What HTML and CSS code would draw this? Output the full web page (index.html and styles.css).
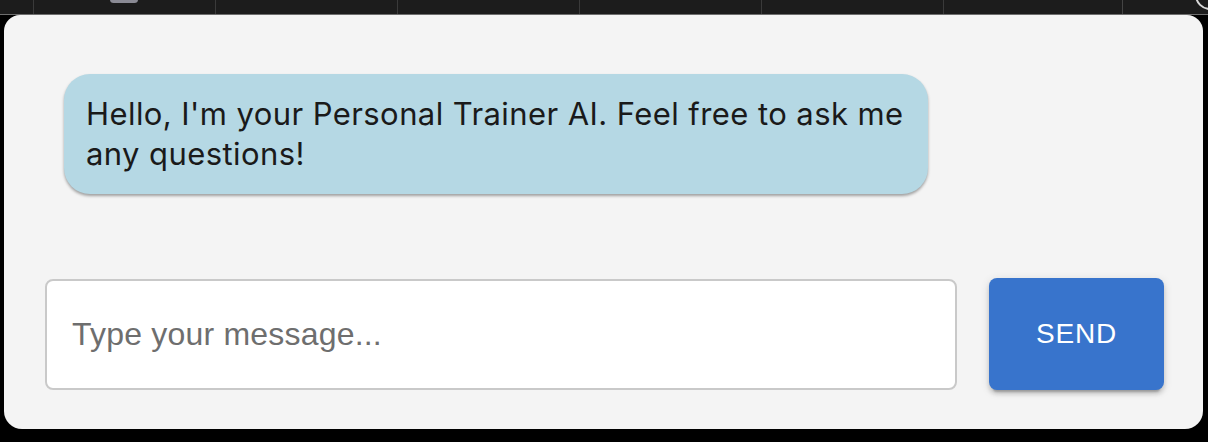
FILE: index.html
```html
<!DOCTYPE html>
<html lang="en">
<head>
<meta charset="utf-8">
<title>Personal Trainer AI</title>
<link rel="stylesheet" href="styles.css">
</head>
<body>
  <div class="topbar">
    <div class="tab tab-first"><span class="pill"></span></div>
    <div class="tab"></div>
    <div class="tab"></div>
    <div class="tab"></div>
    <div class="tab"></div>
    <div class="tab"></div>
    <div class="tab"></div>
    <div class="tab tab-last"><span class="ring"></span></div>
  </div>
  <main class="panel">
    <section class="messages">
      <div class="bubble">Hello, I'm your Personal Trainer AI. Feel free to ask me any questions!</div>
    </section>
    <form class="composer">
      <input class="field" type="text" placeholder="Type your message...">
      <button class="send" type="button">SEND</button>
    </form>
  </main>
</body>
</html>
```

FILE: styles.css
```css
html, body {
  margin: 0;
  padding: 0;
  background: #000;
  height: 442px;
  overflow: hidden;
}

.topbar {
  display: flex;
  height: 14px;
  background: #1c1c1c;
  border-bottom: 1px solid #6e6e6e;
  overflow: hidden;
  position: relative;
}

.tab {
  width: 182px;
  flex: none;
  border-left: 1px solid #3a3a3a;
  box-sizing: border-box;
  position: relative;
}

.tab-first {
  width: 33px;
  border-left: none;
  position: static;
}

.tab:nth-child(7) {
  width: 179px;
}

.tab-last {
  flex: 1;
  width: auto;
  border-left-color: #444;
}

.pill {
  position: absolute;
  left: 110px;
  top: -4px;
  width: 28px;
  height: 7px;
  border-radius: 4px;
  background: #8a8a94;
}

.ring {
  position: absolute;
  left: 72px;
  top: -20px;
  width: 26px;
  height: 26px;
  border-radius: 50%;
  border: 2px solid #d8d8d8;
}

.panel {
  margin: 0 5px 0 4px;
  height: 414px;
  box-sizing: border-box;
  background: #f4f4f4;
  border-radius: 16px 16px 18px 18px;
  padding: 40px 39px 39px 41px;
  display: flex;
  flex-direction: column;
}

.messages {
  flex: 1;
  padding: 19px 0 0 19px;
}

.bubble {
  width: 864px;
  box-sizing: border-box;
  padding: 20px 10px 20px 22px;
  background: #b5d8e4;
  border-radius: 26px;
  box-shadow: 0 2px 3px rgba(0, 0, 0, 0.35);
  font-family: Inter, "Noto Sans", sans-serif;
  font-size: 31px;
  letter-spacing: 0.42px;
  line-height: 40px;
  color: #1a1a1a;
}

.composer {
  display: flex;
  align-items: center;
  gap: 32px;
  margin: 0;
}

.field {
  flex: 1;
  height: 111px;
  box-sizing: border-box;
  border: 2px solid #c9c9c9;
  border-radius: 8px;
  background: #fff;
  padding: 0 25px;
  font-family: "Liberation Sans", Arial, sans-serif;
  font-size: 32px;
  letter-spacing: 0.2px;
  color: #222;
  outline: none;
}

.field::placeholder {
  color: #6e6e6e;
  opacity: 1;
}

.send {
  width: 175px;
  height: 112px;
  flex: none;
  border: none;
  border-radius: 8px;
  background: #3874cc;
  color: #fff;
  font-family: "Liberation Sans", Arial, sans-serif;
  font-size: 28px;
  letter-spacing: 0.8px;
  box-shadow: 0 6px 2px -4px rgba(0, 0, 0, 0.2), 0 4px 4px 0 rgba(0, 0, 0, 0.14), 0 2px 10px 0 rgba(0, 0, 0, 0.12);
  cursor: pointer;
}
```
